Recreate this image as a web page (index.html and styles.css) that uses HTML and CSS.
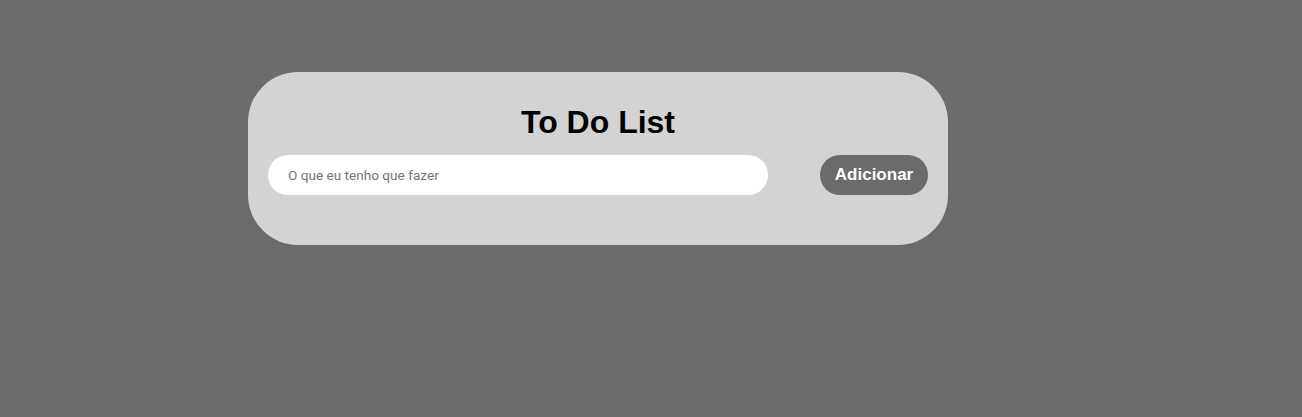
FILE: index.html
```html
<!DOCTYPE html>
<html lang="pt">
<head>
<meta charset="utf-8">
<title>To Do List</title>
<link rel="stylesheet" href="styles.css">
</head>
<body>
<main class="page">
  <section class="card">
    <h1 class="title">To Do List</h1>
    <form class="row">
      <input class="task-input" type="text" placeholder="O que eu tenho que fazer">
      <button class="add-btn" type="button">Adicionar</button>
    </form>
  </section>
</main>
</body>
</html>
```

FILE: styles.css
```css
html, body {
  margin: 0;
  padding: 0;
  height: 100%;
}
body {
  background: #6b6b6b;
  font-family: "Liberation Sans", Arial, sans-serif;
}
.page {
  padding-top: 72px;
  padding-left: 248px;
}
.card {
  box-sizing: border-box;
  width: 700px;
  height: 173px;
  background: #d3d3d3;
  border-radius: 50px;
  padding: 32px 20px 0;
}
.title {
  margin: 0 0 14px;
  font-size: 32px;
  line-height: 37px;
  font-weight: bold;
  text-align: center;
  color: #000;
}
.row {
  display: flex;
  justify-content: space-between;
  align-items: center;
  margin: 0;
}
.task-input {
  box-sizing: border-box;
  width: 500px;
  height: 40px;
  border: none;
  outline: none;
  border-radius: 20px;
  background: #fff;
  padding: 0 20px;
  font-family: Roboto, "Liberation Sans", sans-serif;
  font-size: 13.6px;
  color: #333;
}
.task-input::placeholder {
  color: #757575;
}
.add-btn {
  box-sizing: border-box;
  width: 108px;
  height: 40px;
  border: none;
  border-radius: 20px;
  background: #6b6b6b;
  color: #fff;
  font-family: "Liberation Sans", Arial, sans-serif;
  font-size: 17px;
  font-weight: bold;
  padding: 0;
  cursor: pointer;
}
```
